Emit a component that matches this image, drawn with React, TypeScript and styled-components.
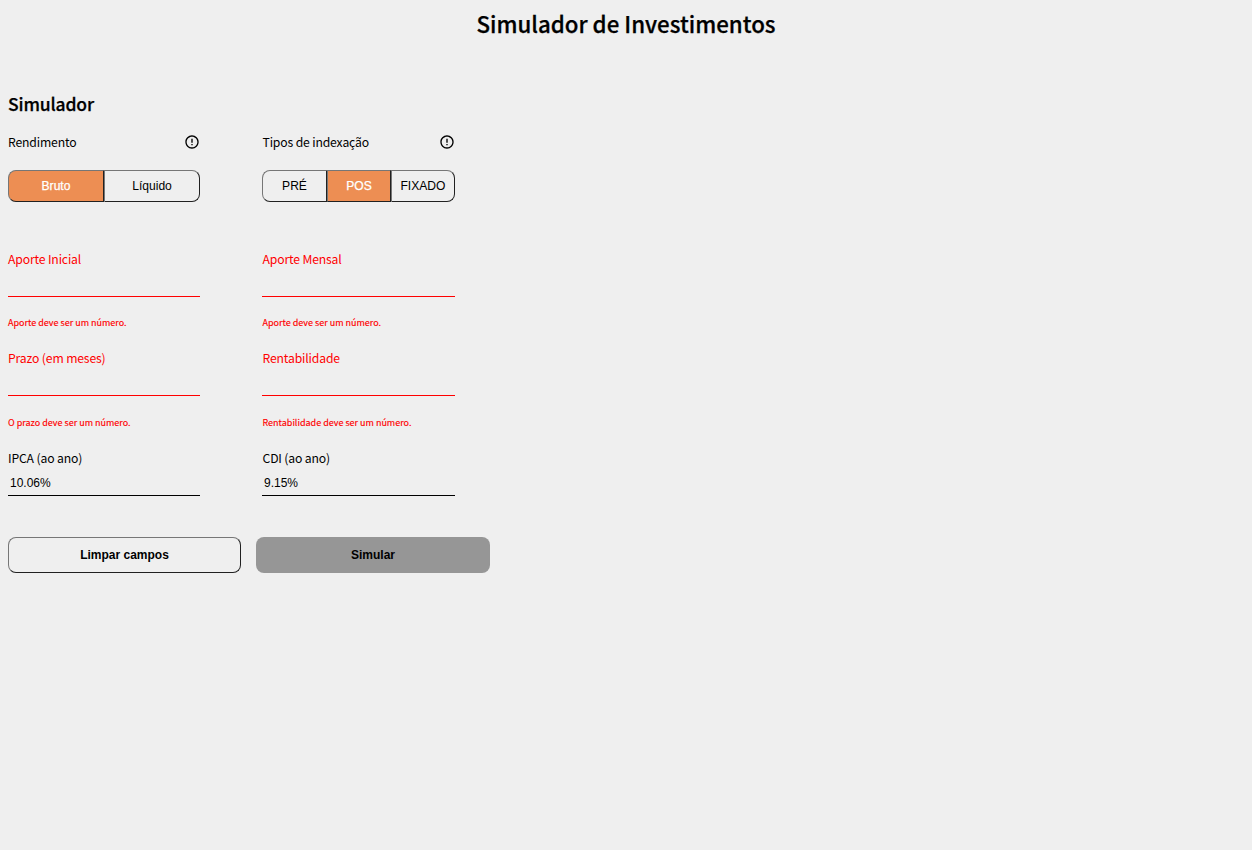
import React, { useState } from "react";
import styled, { createGlobalStyle } from "styled-components";
import { MdErrorOutline } from "react-icons/md";

const GlobalStyle = createGlobalStyle`
  * { box-sizing: border-box; }
  html, body { margin: 0; background: #efefef; }
  body { font-family: "Noto Sans CJK SC", "Open Sans", sans-serif; color: #000; }
`;

const Page = styled.main`
  min-height: 850px;
  padding: 0 8px;
`;

const Title = styled.h1`
  margin: 0;
  padding: 5px 0 9px;
  font-size: 22.3px;
  font-weight: 500;
  line-height: 36px;
  text-align: center;
  -webkit-text-stroke: 0.25px #000;
`;

const Subtitle = styled.h2`
  margin: 40px 0 1px;
  font-size: 17.5px;
  font-weight: 500;
  line-height: 27px;
  letter-spacing: -0.15px;
  -webkit-text-stroke: 0.25px #000;
`;

const Form = styled.form`
  display: flex;
  flex-direction: column;
`;

const Columns = styled.div`
  display: grid;
  grid-template-columns: 192px 193px;
  column-gap: 62px;
`;

const Column = styled.div`
  display: flex;
  flex-direction: column;

  &:last-child { text-indent: 0.5px; }
`;

const LabelRow = styled.div`
  display: flex;
  align-items: center;
  justify-content: space-between;
  height: 20px;
  margin-top: 14px;
  font-size: 12.2px;
  letter-spacing: -0.15px;
  line-height: 20px;

  svg { display: block; }
`;

const Segments = styled.div`
  display: flex;
  height: 32px;
  margin: 18px 0 47px;
`;

const Segment = styled.button<{ $active: boolean }>`
  flex: 1 1 64px;
  padding: 0;
  border: 1px outset #767676;
  background: ${({ $active }) => ($active ? "#ed8e53" : "#efefef")};
  color: ${({ $active }) => ($active ? "#fff" : "#000")};
  font: 12.1px "Liberation Sans", Arial, sans-serif;
  -webkit-text-stroke: ${({ $active }) => ($active ? "0.25px #fff" : "0")};

  &:first-child { border-radius: 8px 0 0 8px; }
  &:last-child { border-radius: 0 8px 8px 0; }
  &:first-child:nth-last-child(3) { flex: 0 0 65px; }
`;

const Field = styled.div<{ $error?: boolean }>`
  display: flex;
  flex-direction: column;
  height: ${({ $error }) => ($error ? "99.4px" : "89.2px")};
  color: ${({ $error }) => ($error ? "#ff0000" : "#000")};
`;

const FieldLabel = styled.label`
  font-size: 12.2px;
  letter-spacing: -0.15px;
  line-height: 20px;
`;

const Input = styled.input<{ $error?: boolean }>`
  width: 100%;
  height: 28px;
  padding: 5px 2px 1px;
  border: 0;
  border-bottom: 1px solid ${({ $error }) => ($error ? "#ff0000" : "#000")};
  outline: 0;
  background: transparent;
  color: #000;
  font: 12px "Liberation Sans", Arial, sans-serif;
`;

const ErrorText = styled.span`
  margin-top: 19.2px;
  font-size: 9px;
  line-height: 14px;
  -webkit-text-stroke: 0.15px #ff0000;
`;

const Actions = styled.div`
  display: grid;
  grid-template-columns: 233px 234px;
  column-gap: 15px;
`;

const ActionButton = styled.button<{ $filled?: boolean }>`
  height: 36px;
  padding: 0;
  border: ${({ $filled }) => ($filled ? "0" : "1px outset #767676")};
  border-radius: 8px;
  background: ${({ $filled }) => ($filled ? "#969696" : "#efefef")};
  color: #000;
  font: bold 12px "Liberation Sans", Arial, sans-serif;
`;

interface ToggleProps {
  label: string;
  options: string[];
  initial: string;
}

function Toggle({ label, options, initial }: ToggleProps) {
  const [value, setValue] = useState(initial);
  return (
    <>
      <LabelRow>
        {label}
        <MdErrorOutline size={16} />
      </LabelRow>
      <Segments>
        {options.map((option) => (
          <Segment key={option} type="button" $active={option === value} onClick={() => setValue(option)}>
            {option}
          </Segment>
        ))}
      </Segments>
    </>
  );
}

interface TextFieldProps {
  id: string;
  label: string;
  value?: string;
  error?: string;
}

function TextField({ id, label, value, error }: TextFieldProps) {
  return (
    <Field $error={!!error}>
      <FieldLabel htmlFor={id}>{label}</FieldLabel>
      <Input id={id} defaultValue={value} $error={!!error} />
      {error && <ErrorText>{error}</ErrorText>}
    </Field>
  );
}

export default function App() {
  return (
    <Page>
      <GlobalStyle />
      <Title>Simulador de Investimentos</Title>
      <Subtitle>Simulador</Subtitle>
      <Form onSubmit={(event) => event.preventDefault()}>
        <Columns>
          <Column>
            <Toggle label="Rendimento" options={["Bruto", "Líquido"]} initial="Bruto" />
            <TextField id="inicial" label="Aporte Inicial" error="Aporte deve ser um número." />
            <TextField id="prazo" label="Prazo (em meses)" error="O prazo deve ser um número." />
            <TextField id="ipca" label="IPCA (ao ano)" value="10.06%" />
          </Column>
          <Column>
            <Toggle label="Tipos de indexação" options={["PRÉ", "POS", "FIXADO"]} initial="POS" />
            <TextField id="mensal" label="Aporte Mensal" error="Aporte deve ser um número." />
            <TextField id="rentabilidade" label="Rentabilidade" error="Rentabilidade deve ser um número." />
            <TextField id="cdi" label="CDI (ao ano)" value="9.15%" />
          </Column>
        </Columns>
        <Actions>
          <ActionButton type="reset">Limpar campos</ActionButton>
          <ActionButton type="submit" $filled>Simular</ActionButton>
        </Actions>
      </Form>
    </Page>
  );
}
